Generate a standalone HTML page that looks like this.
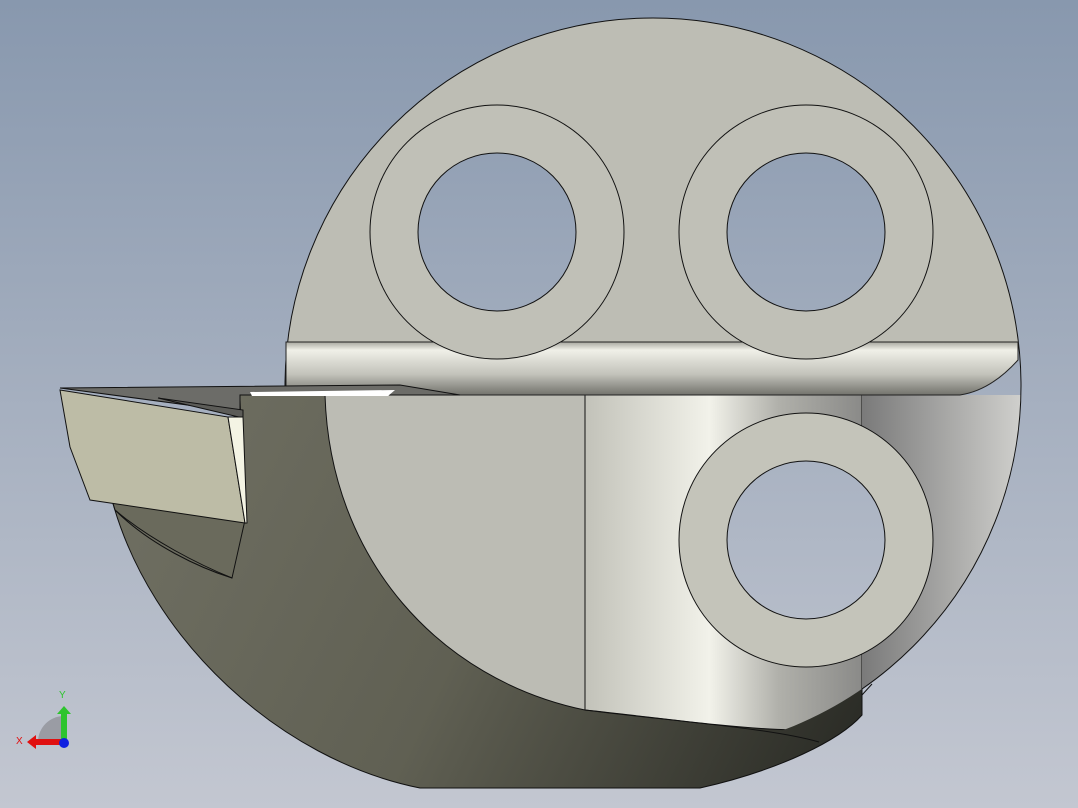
<!DOCTYPE html><html><head><style>html,body{margin:0;padding:0}body{width:1078px;height:808px;overflow:hidden}svg{display:block}</style></head><body>
<svg width="1078" height="808" viewBox="0 0 1078 808" xmlns="http://www.w3.org/2000/svg">
<defs>
<linearGradient id="bg" x1="0" y1="0" x2="0" y2="808" gradientUnits="userSpaceOnUse"><stop offset="0" stop-color="#8898ae"/><stop offset="1" stop-color="#c3c7d1"/></linearGradient>
<linearGradient id="dark" x1="120" y1="450" x2="820" y2="790" gradientUnits="userSpaceOnUse"><stop offset="0" stop-color="#6f6f62"/><stop offset="0.5" stop-color="#606053"/><stop offset="1" stop-color="#2c2d27"/></linearGradient>
<linearGradient id="cyl" x1="585" y1="0" x2="862" y2="0" gradientUnits="userSpaceOnUse"><stop offset="0" stop-color="#c2c2b9"/><stop offset="0.45" stop-color="#f2f2ea"/><stop offset="0.7" stop-color="#b0b0aa"/><stop offset="1" stop-color="#8a8a88"/></linearGradient>
<linearGradient id="rgt" x1="862" y1="0" x2="1020" y2="0" gradientUnits="userSpaceOnUse"><stop offset="0" stop-color="#7a7a7a"/><stop offset="1" stop-color="#cfcfcc"/></linearGradient>
<linearGradient id="band" x1="0" y1="342" x2="0" y2="396" gradientUnits="userSpaceOnUse"><stop offset="0" stop-color="#a8a8a0"/><stop offset="0.15" stop-color="#f0f0e8"/><stop offset="0.6" stop-color="#c2c2ba"/><stop offset="1" stop-color="#6e6e68"/></linearGradient>
<clipPath id="disk"><circle cx="653" cy="386" r="368"/></clipPath>
<clipPath id="outl"><rect x="0" y="0" width="1078" height="396"/><rect x="862" y="396" width="216" height="300"/></clipPath>
</defs>
<rect width="1078" height="808" fill="url(#bg)"/>
<path d="M112,500 C150,640 280,760 420,788 L700,788 C780,770 840,740 862,715 L862,395 L240,395 L240,500 Z" fill="url(#dark)" stroke="#111" stroke-width="1"/>
<g clip-path="url(#disk)">
<rect x="280" y="0" width="800" height="342" fill="#bdbdb4"/>
<path d="M325,395 C330,560 440,680 585,710 L585,395 Z" fill="#bcbcb4" stroke="#111"/>
<path d="M585,395 L862,395 L862,720 C820,742 700,722 585,710 Z" fill="url(#cyl)" stroke="#111"/>
<path d="M862,395 L1040,395 L1040,660 L880,680 L862,695 Z" fill="url(#rgt)"/>
</g>
<path d="M819,742 C770,728 680,722 585,710" fill="none" stroke="#111"/>
<circle cx="653" cy="386" r="368" fill="none" stroke="#111" stroke-width="1" clip-path="url(#outl)"/>
<path d="M862,695 L872,684" stroke="#111"/>
<path d="M286,342 L1018,342 L1018,360 C1000,380 980,392 960,395 L286,395 Z" fill="url(#band)" stroke="#222" stroke-width="1"/>
<g stroke="#111" stroke-width="1">
<circle cx="497" cy="232" r="127" fill="#c0c0b7"/><circle cx="497" cy="232" r="79" fill="url(#bg)"/>
<circle cx="806" cy="232" r="127" fill="#c0c0b7"/><circle cx="806" cy="232" r="79" fill="url(#bg)"/>
<circle cx="806" cy="540" r="127" fill="#c4c4ba"/><circle cx="806" cy="540" r="79" fill="url(#bg)"/>
</g>
<path d="M240,400 L245,520 L232,578 C200,565 150,540 115,510 L112,500 L240,500 Z" fill="#6a6a5c" stroke="#111"/>
<path d="M115,510 C150,545 200,568 232,578" fill="none" stroke="#111"/>
<path d="M60,388 L400,385 L460,395 L240,395 L240,412 Z" fill="#6c6c68" stroke="#111"/>
<path d="M250,392 L395,390 L388,396 L252,396 Z" fill="#fff"/>
<path d="M158,398 L243,410 L243,418 Z" fill="#5c5c58" stroke="#111"/>
<path d="M60,390 L228,417 L245,523 L90,500 L70,447 Z" fill="#bdbca6" stroke="#111"/>
<path d="M228,417 L243,417 L247,523 L245,523 Z" fill="#f4f4e4" stroke="#111"/>
<path d="M38,742 A26,26 0 0 1 64,716 L64,742 Z" fill="#9a9ca4"/>
<rect x="32" y="739" width="32" height="6" fill="#e01010"/><path d="M27,742 L36,735 L36,749 Z" fill="#e01010"/>
<rect x="61" y="712" width="6" height="30" fill="#2ec42e"/><path d="M64,706 L57,714 L71,714 Z" fill="#2ec42e"/>
<circle cx="64" cy="743" r="5" fill="#1020e0"/>
<text x="16" y="744" font-family="Liberation Sans,sans-serif" font-size="10" fill="#e01010">X</text>
<text x="59" y="698" font-family="Liberation Sans,sans-serif" font-size="10" fill="#2ec42e">Y</text>
</svg>
</body></html>
